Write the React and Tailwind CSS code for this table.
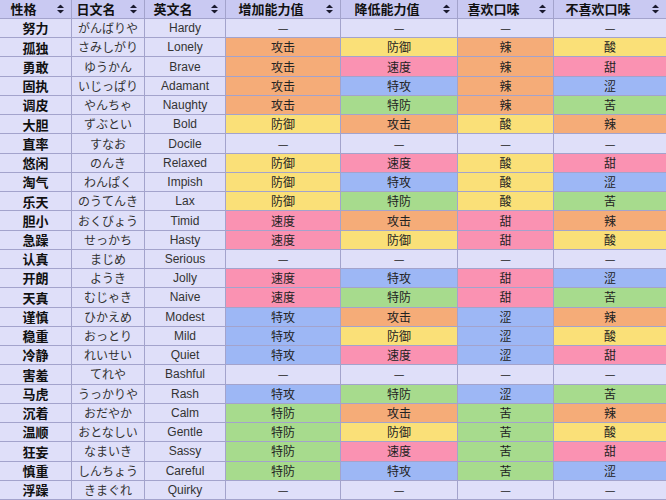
import React from 'react';

// 性格表：增加/降低能力值与口味
const statColor = {
  '攻击': 'bg-[#f5ac78]',
  '防御': 'bg-[#fae078]',
  '速度': 'bg-[#fa92b2]',
  '特攻': 'bg-[#9db7f5]',
  '特防': 'bg-[#a7db8d]',
  '辣': 'bg-[#f5ac78]',
  '酸': 'bg-[#fae078]',
  '甜': 'bg-[#fa92b2]',
  '涩': 'bg-[#9db7f5]',
  '苦': 'bg-[#a7db8d]',
};

const headers = ['性格', '日文名', '英文名', '增加能力值', '降低能力值', '喜欢口味', '不喜欢口味'];

const natures = [
  ['努力', 'がんばりや', 'Hardy'],
  ['孤独', 'さみしがり', 'Lonely', '攻击', '防御', '辣', '酸'],
  ['勇敢', 'ゆうかん', 'Brave', '攻击', '速度', '辣', '甜'],
  ['固执', 'いじっぱり', 'Adamant', '攻击', '特攻', '辣', '涩'],
  ['调皮', 'やんちゃ', 'Naughty', '攻击', '特防', '辣', '苦'],
  ['大胆', 'ずぶとい', 'Bold', '防御', '攻击', '酸', '辣'],
  ['直率', 'すなお', 'Docile'],
  ['悠闲', 'のんき', 'Relaxed', '防御', '速度', '酸', '甜'],
  ['淘气', 'わんぱく', 'Impish', '防御', '特攻', '酸', '涩'],
  ['乐天', 'のうてんき', 'Lax', '防御', '特防', '酸', '苦'],
  ['胆小', 'おくびょう', 'Timid', '速度', '攻击', '甜', '辣'],
  ['急躁', 'せっかち', 'Hasty', '速度', '防御', '甜', '酸'],
  ['认真', 'まじめ', 'Serious'],
  ['开朗', 'ようき', 'Jolly', '速度', '特攻', '甜', '涩'],
  ['天真', 'むじゃき', 'Naive', '速度', '特防', '甜', '苦'],
  ['谨慎', 'ひかえめ', 'Modest', '特攻', '攻击', '涩', '辣'],
  ['稳重', 'おっとり', 'Mild', '特攻', '防御', '涩', '酸'],
  ['冷静', 'れいせい', 'Quiet', '特攻', '速度', '涩', '甜'],
  ['害羞', 'てれや', 'Bashful'],
  ['马虎', 'うっかりや', 'Rash', '特攻', '特防', '涩', '苦'],
  ['沉着', 'おだやか', 'Calm', '特防', '攻击', '苦', '辣'],
  ['温顺', 'おとなしい', 'Gentle', '特防', '防御', '苦', '酸'],
  ['狂妄', 'なまいき', 'Sassy', '特防', '速度', '苦', '甜'],
  ['慎重', 'しんちょう', 'Careful', '特防', '特攻', '苦', '涩'],
  ['浮躁', 'きまぐれ', 'Quirky'],
];

const SortIcon = () => (
  <svg width="7" height="9" viewBox="0 0 7 9" className="absolute right-[7px] top-1/2 -translate-y-1/2">
    <path d="M3.5 0 L7 3.6 L0 3.6 Z" fill="#1a1a2e" />
    <path d="M0 5.4 L7 5.4 L3.5 9 Z" fill="#1a1a2e" />
  </svg>
);

export default function App() {
  return (
    <div className="w-[666px] h-[500px] grid grid-cols-[71px_72px_80px_114px_116px_95px_112px] grid-rows-[18px_repeat(25,minmax(0,1fr))] gap-px bg-[#a3a3cc] pb-px text-[12px] text-[#222] font-['Liberation_Sans',Arial,'Noto_Sans_CJK_SC',sans-serif]">
      {/* HEADER */}
      {headers.map((h) => (
        <div
          key={h}
          className="relative flex items-center justify-center pr-6 bg-[#c9c9f2] font-bold text-[13px] text-[#111] font-['Noto_Sans_CJK_SC',sans-serif]"
        >
          {h}
          <SortIcon />
        </div>
      ))}

      {/* ROWS */}
      {natures.map((n) => {
        const [zh, jp, en, up, down, like, dislike] = n;
        const stats = [up, down, like, dislike];
        return (
          <React.Fragment key={en}>
            <div className="flex items-center justify-center bg-[#dfdff9] font-bold text-[13px] text-[#111] font-['Noto_Sans_CJK_SC',sans-serif]">
              {zh}
            </div>
            <div className="flex items-center justify-center bg-[#dfdff9] text-[#333] font-['Noto_Sans_CJK_JP',sans-serif]">
              {jp}
            </div>
            <div className="flex items-center justify-center bg-[#dfdff9] text-[#333]">{en}</div>
            {stats.map((s, i) => (
              <div
                key={i}
                className={`flex items-center justify-center text-[#222] font-['Noto_Sans_CJK_SC',sans-serif] ${s ? statColor[s] : 'bg-[#dfdff9]'}`}
              >
                {s || '—'}
              </div>
            ))}
          </React.Fragment>
        );
      })}
    </div>
  );
}
